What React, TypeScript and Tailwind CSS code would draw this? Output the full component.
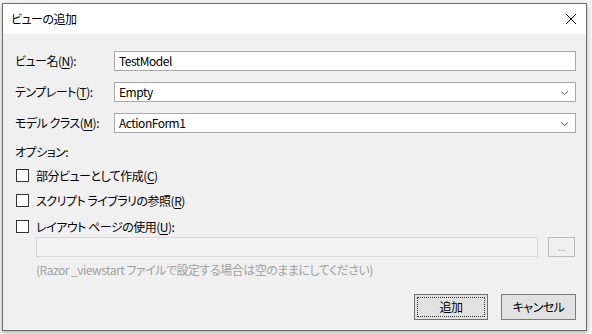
import React from "react";

const font = { fontFamily: '"Noto Sans CJK JP", "Noto Sans", sans-serif' };

function Chevron() {
  return (
    <svg width="9" height="6" viewBox="0 0 9 6" className="absolute right-[6px] top-[7px]">
      <path d="M1 1.5 L4.5 4.5 L8 1.5" fill="none" stroke="#606060" strokeWidth="1" />
    </svg>
  );
}

function Field({ value, select }: { value: string; select?: boolean }) {
  return (
    <div className="relative h-[20px] flex-1 border border-[#a9a9a9] bg-white pl-[4px] text-[12px] leading-[18px] text-black">
      {value}
      {select && <Chevron />}
    </div>
  );
}

function Check({ children }: { children: React.ReactNode }) {
  return (
    <div className="flex items-center h-[13px]">
      <div className="h-[13px] w-[13px] border border-[#333333] bg-white" />
      <span className="ml-[7px] text-[12px] leading-[16px] text-black">{children}</span>
    </div>
  );
}

const U = ({ c }: { c: string }) => <span className="underline underline-offset-2">{c}</span>;

export default function App() {
  return (
    <div
      className="h-[334px] w-[592px] bg-[#f4f4f4] pl-[2px] pt-[3px] tracking-[-0.5px] [font-feature-settings:'palt']"
      style={font}
    >
      <div className="flex h-[328px] w-[585px] flex-col border border-[#6b6b6b] bg-[#f0f0f0] shadow-[0_2px_4px_rgba(0,0,0,0.25)]">
        <div className="flex h-[30px] items-center justify-between bg-white pl-[8px] pr-[8px]">
          <span className="text-[12px] text-black">ビューの追加</span>
          <svg width="12" height="12" viewBox="0 0 12 12" className="mr-[1px]">
            <path d="M1 1 L11 11 M11 1 L1 11" stroke="#000" strokeWidth="1" />
          </svg>
        </div>
        <div className="flex flex-1 flex-col pl-[12px] pr-[10px] pt-[17px]">
          <div className="flex items-center">
            <span className="w-[99px] text-[12px] text-black">ビュー名(<U c="N" />):</span>
            <Field value="TestModel" />
          </div>
          <div className="mt-[11px] flex items-center">
            <span className="w-[99px] text-[12px] text-black">テンプレート(<U c="T" />):</span>
            <Field value="Empty" select />
          </div>
          <div className="mt-[11px] flex items-center">
            <span className="w-[99px] text-[12px] text-black">モデル クラス(<U c="M" />):</span>
            <Field value="ActionForm1" select />
          </div>
          <div className="mt-[11px] text-[12px] leading-[16px] text-black">オプション:</div>
          <div className="ml-[1px] mt-[9px]">
            <Check>部分ビューとして作成(<U c="C" />)</Check>
          </div>
          <div className="ml-[1px] mt-[12px]">
            <Check>スクリプト ライブラリの参照(<U c="R" />)</Check>
          </div>
          <div className="ml-[1px] mt-[13px]">
            <Check>レイアウト ページの使用(<U c="U" />):</Check>
          </div>
          <div className="ml-[21px] mt-[4px] flex items-center">
            <div className="h-[20px] w-[502px] border border-[#d9d9d9] bg-[#f3f3f3]" />
            <div className="ml-[10px] flex h-[20px] w-[27px] items-center justify-center border border-[#bcbcbc] bg-[#f0f0f0] text-[10px] leading-none text-[#9a9a9a]">
              ...
            </div>
          </div>
          <div className="ml-[21px] mt-[5px] text-[12px] leading-[16px] text-[#a0a0a0]">
            (Razor _viewstart ファイルで設定する場合は空のままにしてください)
          </div>
          <div className="mt-[16px] flex justify-end">
            <div className="flex h-[26px] w-[74px] items-center justify-center border border-[#707070] bg-[#e1e1e1] p-[2px]">
              <div className="flex h-full w-full items-center justify-center border border-dotted border-[#333] text-[12px] text-black">
                追加
              </div>
            </div>
            <div className="ml-[13px] flex h-[26px] w-[75px] items-center justify-center border border-[#7a7a7a] bg-[#e1e1e1] text-[12px] text-black">
              キャンセル
            </div>
          </div>
        </div>
      </div>
    </div>
  );
}
